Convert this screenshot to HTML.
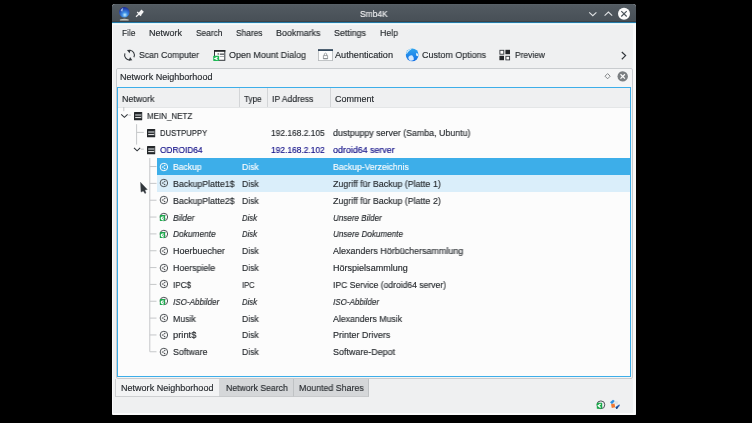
<!DOCTYPE html>
<html><head><meta charset="utf-8">
<style>
*{margin:0;padding:0;box-sizing:border-box}
html,body{width:752px;height:423px;overflow:hidden;background:#000}
body{position:relative;font-family:"Liberation Sans",sans-serif;font-size:9px;color:#262a2e}
.a{position:absolute;white-space:nowrap;line-height:12px;transform-origin:0 0;will-change:transform;-webkit-text-stroke:0.15px currentColor}
svg{position:absolute;overflow:visible}
</style></head><body>

<div style="position:absolute;left:112px;top:4px;width:524px;height:411px;background:#eff0f1;border-radius:3px 3px 1px 1px;border-left:1px solid #f9f9fa;border-right:3px solid #f8f9f9;border-bottom:2px solid #fbfbfb;"></div>
<div style="position:absolute;left:112px;top:4px;width:524px;height:18px;background:linear-gradient(#5a636a,#525a61 8%,#474f56);border-radius:3px 3px 0 0;"></div>
<div style="position:absolute;left:112px;top:21px;width:524px;height:1px;background:#3c4146;"></div>
<div style="position:absolute;left:112px;top:22px;width:524px;height:1px;background:#2479a6;"></div>
<div style="position:absolute;left:112px;top:23px;width:524px;height:1px;background:#dff6fd;"></div>
<div style="position:absolute;left:112px;top:24px;width:524px;height:1px;background:#faf9f7;"></div>
<div class="a" style="left:360.20px;top:7.85px;color:#eff0f1;transform:scaleX(0.9390);">Smb4K</div>
<svg style="left:112px;top:4px" width="40" height="18">
<defs><radialGradient id="g1" cx="0.55" cy="0.75" r="0.7"><stop offset="0" stop-color="#c9f3ff"/><stop offset="0.35" stop-color="#3f8fe6"/><stop offset="1" stop-color="#1a2fa0"/></radialGradient></defs>
<circle cx="12.3" cy="8.3" r="5.2" fill="url(#g1)"/>
<path d="M8.6 6.2 Q9.6 4.2 11.2 3.9 Q10.8 5.4 10.4 7.6 Q9.4 7.4 8.6 6.2 Z" fill="#c4daf6" opacity="0.75"/>
<path d="M8.2 15.8 Q12.3 13.6 16.6 15.8 Z" fill="#d8d4c8"/>
<rect x="7.8" y="15.4" width="9" height="1" fill="#cfcbc0" rx="0.4"/>
<path d="M24 12.8 L27 10" stroke="#f4f4f4" stroke-width="1.2"/>
<path d="M29.4 5.6 L31.8 7.8 L28.9 11.5 L26.2 9.2 Z" fill="#f4f4f4"/>
<path d="M25.2 8 L29 11.8" stroke="#f4f4f4" stroke-width="1.3"/>
</svg>
<svg style="left:580px;top:4px" width="56" height="18">
<path d="M9.2 8.3 L12.8 11.7 L16.4 8.3" fill="none" stroke="#dfe1e3" stroke-width="1.1"/>
<path d="M24.6 11.7 L28.4 8.1 L32.2 11.7" fill="none" stroke="#dfe1e3" stroke-width="1.1"/>
<circle cx="44" cy="9.8" r="6" fill="#fcfcfc"/>
<path d="M41.3 7.1 L46.7 12.5 M46.7 7.1 L41.3 12.5" stroke="#475057" stroke-width="1.1"/>
</svg>
<div class="a" style="left:121.60px;top:27.35px;transform:scaleX(0.9241);">File</div>
<div class="a" style="left:148.80px;top:27.35px;transform:scaleX(0.9970);">Network</div>
<div class="a" style="left:195.80px;top:27.35px;transform:scaleX(0.9263);">Search</div>
<div class="a" style="left:235.80px;top:27.35px;transform:scaleX(0.9298);">Shares</div>
<div class="a" style="left:276.00px;top:27.35px;transform:scaleX(0.9867);">Bookmarks</div>
<div class="a" style="left:334.00px;top:27.35px;transform:scaleX(0.9815);">Settings</div>
<div class="a" style="left:379.50px;top:27.35px;transform:scaleX(0.9730);">Help</div>
<div class="a" style="left:139.00px;top:49.35px;transform:scaleX(0.9600);">Scan Computer</div>
<div class="a" style="left:229.00px;top:49.35px;transform:scaleX(0.9935);">Open Mount Dialog</div>
<div class="a" style="left:335.00px;top:49.35px;transform:scaleX(1.0175);">Authentication</div>
<div class="a" style="left:422.00px;top:49.35px;transform:scaleX(0.9922);">Custom Options</div>
<div class="a" style="left:515.00px;top:49.35px;transform:scaleX(0.9346);">Preview</div>
<svg style="left:112px;top:42px" width="524" height="24">
<g fill="none" stroke="#31363b" stroke-width="1.1">
<path d="M17.6 8.2 A4.9 4.9 0 0 1 21.9 15.2"/>
<path d="M12.9 11.4 A4.9 4.9 0 0 0 18.2 17.9"/>
</g>
<path d="M14.9 8.1 L18.6 7.7 L17.6 11.3 Z" fill="#31363b"/>
<path d="M20.3 18.3 L16.6 18.4 L18.1 14.9 Z" fill="#31363b"/>
</svg>
<svg style="left:212px;top:48px" width="16" height="16">
<rect x="2.5" y="2.5" width="10.3" height="9.8" fill="#fcfcfc" stroke="#31363b" stroke-width="1"/>
<rect x="2" y="2" width="11.3" height="1.8" fill="#232629"/>
<rect x="5.5" y="5.3" width="1.5" height="1.3" fill="#5a5f63"/>
<rect x="7.8" y="5.6" width="4.2" height="1.1" fill="#31363b"/>
<rect x="7.8" y="8" width="4.2" height="0.9" fill="#9aa0a4"/>
<rect x="1.2" y="7.8" width="5.9" height="5.1" fill="#1db954" rx="0.6"/>
<path d="M5.5 9.2 L3 10.4 L5.5 11.6" fill="none" stroke="#fff" stroke-width="1.2"/>
</svg>
<svg style="left:316px;top:48px" width="18" height="16">
<rect x="2.4" y="1.6" width="14.2" height="11" fill="#fcfcfc" stroke="#b4b8bb" stroke-width="0.8"/>
<rect x="2" y="1.2" width="15" height="1.8" fill="#34495e"/>
<path d="M7.4 10.8 L7.4 7.6 L11.6 7.6 L11.6 10.8 Z M8.3 7.6 L8.3 5.8 Q9.5 4.4 10.7 5.8 L10.7 7.6" fill="none" stroke="#8d9194" stroke-width="0.8"/>
<rect x="7.2" y="10" width="4.6" height="1" fill="#8d9194"/>
</svg>
<svg style="left:402px;top:46px" width="20" height="18">
<defs><linearGradient id="g2" x1="0" y1="0" x2="0" y2="1"><stop offset="0" stop-color="#2fa4ee"/><stop offset="1" stop-color="#1470e6"/></linearGradient></defs>
<circle cx="10.2" cy="8.9" r="6.4" fill="url(#g2)"/>
<path d="M4.2 7.6 Q4.8 3.8 9.8 2.6 Q9.6 3.8 7.6 4.6 Q6 6 4.8 8 Z" fill="#d2ecfb"/>
<path d="M6.4 11 Q7.8 8.8 10.4 9.4 Q12.2 11 11.8 13.8 Q9.4 15.4 7.6 14.4 Q6 13 6.4 11 Z" fill="#d4e8fc"/>
<path d="M14.2 6.8 Q16.4 7.2 16.6 10.2 Q15 10.4 14 9.2 Z" fill="#dcf0fc"/>
</svg>
<svg style="left:496px;top:46px" width="18" height="18">
<rect x="3.9" y="4.3" width="3.9" height="3.9" fill="#fff" stroke="#31363b" stroke-width="0.9"/>
<rect x="9.4" y="3.8" width="4.6" height="4.4" fill="#232629"/>
<rect x="3.4" y="9.8" width="4.6" height="4.4" fill="#232629"/>
<rect x="9.9" y="10.3" width="3.7" height="3.6" fill="#fff" stroke="#31363b" stroke-width="0.9"/>
</svg>
<svg style="left:616px;top:46px" width="16" height="16">
<path d="M5.8 6 L9.6 9.6 L5.8 13.2" fill="none" stroke="#31363b" stroke-width="1.2"/>
</svg>
<div style="position:absolute;left:116px;top:68px;width:517px;height:311px;background:#f4f5f6;border:1px solid #c9cccf;border-radius:2px;"></div>
<div class="a" style="left:119.60px;top:71.35px;transform:scaleX(1.0043);">Network Neighborhood</div>
<svg style="left:598px;top:66px" width="36" height="22">
<path d="M9.6 7.6 L12.2 10.2 L9.6 12.8 L7 10.2 Z" fill="none" stroke="#76797c" stroke-width="0.9"/>
<circle cx="24.7" cy="10.4" r="5.2" fill="#7b7f82"/>
<path d="M22.5 8.2 L26.9 12.6 M26.9 8.2 L22.5 12.6" stroke="#fcfcfc" stroke-width="1.25"/>
</svg>
<div style="position:absolute;left:117px;top:87px;width:514px;height:290px;background:#fcfcfc;border:1px solid #3daee9;"></div>
<div style="position:absolute;left:118px;top:88px;width:512px;height:20px;background:#eff0f1;border-bottom:1px solid #e4e6e7;"></div>
<div style="position:absolute;left:239px;top:88px;width:1px;height:19px;background:#d3d5d7;"></div>
<div style="position:absolute;left:267px;top:88px;width:1px;height:19px;background:#d3d5d7;"></div>
<div style="position:absolute;left:330px;top:88px;width:1px;height:19px;background:#d3d5d7;"></div>
<div class="a" style="left:122.00px;top:92.75px;transform:scaleX(0.9819);">Network</div>
<div class="a" style="left:244.40px;top:92.75px;transform:scaleX(0.9026);">Type</div>
<div class="a" style="left:271.80px;top:92.75px;transform:scaleX(0.9562);">IP Address</div>
<div class="a" style="left:334.50px;top:92.75px;">Comment</div>
<div style="position:absolute;left:156.6px;top:158.12px;width:473.4px;height:16.4px;background:#3daee9;"></div>
<div style="position:absolute;left:156.6px;top:174.76px;width:473.4px;height:17.1px;background:#daeefa;"></div>
<svg style="left:118px;top:107px" width="60" height="260">
<path d="M5.8 0 V4.2 M18.6 17.2 V37.6 M18.6 25.4 H25.8 M31.8 51 V244.7" fill="none" stroke="#c5c7c9" stroke-width="1"/>
<path d="M31.8 59.54 H38.5" stroke="#c5c7c9" stroke-width="1"/>
<path d="M31.8 76.38 H38.5" stroke="#c5c7c9" stroke-width="1"/>
<path d="M31.8 93.22 H38.5" stroke="#c5c7c9" stroke-width="1"/>
<path d="M31.8 110.06 H38.5" stroke="#c5c7c9" stroke-width="1"/>
<path d="M31.8 126.90 H38.5" stroke="#c5c7c9" stroke-width="1"/>
<path d="M31.8 143.74 H38.5" stroke="#c5c7c9" stroke-width="1"/>
<path d="M31.8 160.58 H38.5" stroke="#c5c7c9" stroke-width="1"/>
<path d="M31.8 177.42 H38.5" stroke="#c5c7c9" stroke-width="1"/>
<path d="M31.8 194.26 H38.5" stroke="#c5c7c9" stroke-width="1"/>
<path d="M31.8 211.10 H38.5" stroke="#c5c7c9" stroke-width="1"/>
<path d="M31.8 227.94 H38.5" stroke="#c5c7c9" stroke-width="1"/>
<path d="M31.8 244.78 H38.5" stroke="#c5c7c9" stroke-width="1"/>
<path d="M3.2 7.3 L6.4 10.3 L9.6 7.3" fill="none" stroke="#31363b" stroke-width="1.1"/>
<path d="M10.3 8.1 H13" stroke="#c5c7c9" stroke-width="1"/>
<path d="M16 40.8 L19.1 43.8 L22.2 40.8" fill="none" stroke="#31363b" stroke-width="1.1"/>
<path d="M22.9 42.2 H25.8" stroke="#c5c7c9" stroke-width="1"/>
</svg>
<svg style="left:134px;top:112px" width="9" height="9"><rect x="0" y="0" width="8.2" height="8.2" fill="#232629" rx="0.5"/><rect x="1.2" y="2" width="6" height="2.1" fill="#85898c"/><rect x="1.2" y="5.1" width="6" height="1" fill="#f4f4f4"/><rect x="6.9" y="1.6" width="0.6" height="4.8" fill="#7d8184"/></svg>
<svg style="left:147px;top:129px" width="9" height="9"><rect x="0" y="0" width="8.2" height="8.2" fill="#232629" rx="0.5"/><rect x="1.2" y="2" width="6" height="2.1" fill="#85898c"/><rect x="1.2" y="5.1" width="6" height="1" fill="#f4f4f4"/><rect x="6.9" y="1.6" width="0.6" height="4.8" fill="#7d8184"/></svg>
<svg style="left:147px;top:146px" width="9" height="9"><rect x="0" y="0" width="8.2" height="8.2" fill="#232629" rx="0.5"/><rect x="1.2" y="2" width="6" height="2.1" fill="#85898c"/><rect x="1.2" y="5.1" width="6" height="1" fill="#f4f4f4"/><rect x="6.9" y="1.6" width="0.6" height="4.8" fill="#7d8184"/></svg>
<div class="a" style="left:147.00px;top:110.05px;transform:scaleX(0.8882);">MEIN_NETZ</div>
<div class="a" style="left:160.00px;top:127.39px;transform:scaleX(0.8582);">DUSTPUPPY</div>
<div class="a" style="left:270.50px;top:127.39px;transform:scaleX(0.9339);">192.168.2.105</div>
<div class="a" style="left:332.80px;top:127.39px;transform:scaleX(0.9814);">dustpuppy server (Samba, Ubuntu)</div>
<div class="a" style="left:160.00px;top:144.23px;color:#0e0c86;transform:scaleX(0.9239);">ODROID64</div>
<div class="a" style="left:270.50px;top:144.23px;color:#0e0c86;transform:scaleX(0.9339);">192.168.2.102</div>
<div class="a" style="left:332.80px;top:144.23px;color:#0e0c86;transform:scaleX(0.9872);">odroid64 server</div>
<div class="a" style="left:172.80px;top:161.07px;color:#fcfcfc;transform:scaleX(0.9500);">Backup</div>
<div class="a" style="left:242.20px;top:161.07px;color:#fcfcfc;transform:scaleX(0.9545);">Disk</div>
<div class="a" style="left:332.90px;top:161.07px;color:#fcfcfc;transform:scaleX(0.9582);">Backup-Verzeichnis</div>
<svg style="left:158px;top:160.54px" width="12" height="12"><circle cx="5.9" cy="6" r="3.75" fill="none" stroke="#fcfcfc" stroke-width="1"/><path d="M6.8 4.5 L4.3 6 L6.6 7.5" fill="none" stroke="#fcfcfc" stroke-width="0.55"/><circle cx="6.8" cy="4.5" r="0.65" fill="#fcfcfc"/><circle cx="4.3" cy="6" r="0.55" fill="#fcfcfc"/><circle cx="6.6" cy="7.5" r="0.75" fill="#fcfcfc"/></svg>
<div class="a" style="left:172.80px;top:177.91px;color:#262a2e;transform:scaleX(0.9762);">BackupPlatte1$</div>
<div class="a" style="left:242.20px;top:177.91px;color:#262a2e;transform:scaleX(0.9545);">Disk</div>
<div class="a" style="left:332.90px;top:177.91px;color:#262a2e;transform:scaleX(0.9800);">Zugriff für Backup (Platte 1)</div>
<svg style="left:158px;top:177.38px" width="12" height="12"><circle cx="5.9" cy="6" r="3.75" fill="none" stroke="#505458" stroke-width="1"/><path d="M6.8 4.5 L4.3 6 L6.6 7.5" fill="none" stroke="#505458" stroke-width="0.55"/><circle cx="6.8" cy="4.5" r="0.65" fill="#505458"/><circle cx="4.3" cy="6" r="0.55" fill="#505458"/><circle cx="6.6" cy="7.5" r="0.75" fill="#505458"/></svg>
<div class="a" style="left:172.80px;top:194.75px;color:#262a2e;transform:scaleX(0.9762);">BackupPlatte2$</div>
<div class="a" style="left:242.20px;top:194.75px;color:#262a2e;transform:scaleX(0.9545);">Disk</div>
<div class="a" style="left:332.90px;top:194.75px;color:#262a2e;transform:scaleX(0.9800);">Zugriff für Backup (Platte 2)</div>
<svg style="left:158px;top:194.22px" width="12" height="12"><circle cx="5.9" cy="6" r="3.75" fill="none" stroke="#505458" stroke-width="1"/><path d="M6.8 4.5 L4.3 6 L6.6 7.5" fill="none" stroke="#505458" stroke-width="0.55"/><circle cx="6.8" cy="4.5" r="0.65" fill="#505458"/><circle cx="4.3" cy="6" r="0.55" fill="#505458"/><circle cx="6.6" cy="7.5" r="0.75" fill="#505458"/></svg>
<div class="a" style="left:172.80px;top:211.59px;color:#262a2e;font-style:italic;transform:scaleX(0.9313);">Bilder</div>
<div class="a" style="left:242.20px;top:211.59px;color:#262a2e;font-style:italic;transform:scaleX(0.8603);">Disk</div>
<div class="a" style="left:332.90px;top:211.59px;color:#262a2e;font-style:italic;transform:scaleX(0.8942);">Unsere Bilder</div>
<svg style="left:158px;top:211.06px" width="12" height="12"><circle cx="5.9" cy="6" r="3.75" fill="none" stroke="#505458" stroke-width="1"/><path d="M6.8 4.5 L4.3 6 L6.6 7.5" fill="none" stroke="#505458" stroke-width="0.55"/><circle cx="6.8" cy="4.5" r="0.65" fill="#505458"/><circle cx="4.3" cy="6" r="0.55" fill="#505458"/><circle cx="6.6" cy="7.5" r="0.75" fill="#505458"/><rect x="1.8" y="4.0" width="5.3" height="6.1" fill="#1fa64e" rx="0.5"/><path d="M5.6 5.8 Q3.2 5.9 3.3 7.4 Q3.4 8.9 5.6 9" fill="none" stroke="#fff" stroke-width="1.3"/><circle cx="5.2" cy="7.4" r="0.6" fill="#fff"/></svg>
<div class="a" style="left:172.80px;top:228.43px;color:#262a2e;font-style:italic;transform:scaleX(0.9283);">Dokumente</div>
<div class="a" style="left:242.20px;top:228.43px;color:#262a2e;font-style:italic;transform:scaleX(0.8603);">Disk</div>
<div class="a" style="left:332.90px;top:228.43px;color:#262a2e;font-style:italic;transform:scaleX(0.9032);">Unsere Dokumente</div>
<svg style="left:158px;top:227.90px" width="12" height="12"><circle cx="5.9" cy="6" r="3.75" fill="none" stroke="#505458" stroke-width="1"/><path d="M6.8 4.5 L4.3 6 L6.6 7.5" fill="none" stroke="#505458" stroke-width="0.55"/><circle cx="6.8" cy="4.5" r="0.65" fill="#505458"/><circle cx="4.3" cy="6" r="0.55" fill="#505458"/><circle cx="6.6" cy="7.5" r="0.75" fill="#505458"/><rect x="1.8" y="4.0" width="5.3" height="6.1" fill="#1fa64e" rx="0.5"/><path d="M5.6 5.8 Q3.2 5.9 3.3 7.4 Q3.4 8.9 5.6 9" fill="none" stroke="#fff" stroke-width="1.3"/><circle cx="5.2" cy="7.4" r="0.6" fill="#fff"/></svg>
<div class="a" style="left:172.80px;top:245.27px;color:#262a2e;transform:scaleX(0.9962);">Hoerbuecher</div>
<div class="a" style="left:242.20px;top:245.27px;color:#262a2e;transform:scaleX(0.9545);">Disk</div>
<div class="a" style="left:332.90px;top:245.27px;color:#262a2e;transform:scaleX(0.9947);">Alexanders Hörbüchersammlung</div>
<svg style="left:158px;top:244.74px" width="12" height="12"><circle cx="5.9" cy="6" r="3.75" fill="none" stroke="#505458" stroke-width="1"/><path d="M6.8 4.5 L4.3 6 L6.6 7.5" fill="none" stroke="#505458" stroke-width="0.55"/><circle cx="6.8" cy="4.5" r="0.65" fill="#505458"/><circle cx="4.3" cy="6" r="0.55" fill="#505458"/><circle cx="6.6" cy="7.5" r="0.75" fill="#505458"/></svg>
<div class="a" style="left:172.80px;top:262.11px;color:#262a2e;transform:scaleX(0.9814);">Hoerspiele</div>
<div class="a" style="left:242.20px;top:262.11px;color:#262a2e;transform:scaleX(0.9545);">Disk</div>
<div class="a" style="left:332.90px;top:262.11px;color:#262a2e;transform:scaleX(1.0034);">Hörspielsammlung</div>
<svg style="left:158px;top:261.58px" width="12" height="12"><circle cx="5.9" cy="6" r="3.75" fill="none" stroke="#505458" stroke-width="1"/><path d="M6.8 4.5 L4.3 6 L6.6 7.5" fill="none" stroke="#505458" stroke-width="0.55"/><circle cx="6.8" cy="4.5" r="0.65" fill="#505458"/><circle cx="4.3" cy="6" r="0.55" fill="#505458"/><circle cx="6.6" cy="7.5" r="0.75" fill="#505458"/></svg>
<div class="a" style="left:172.80px;top:278.95px;color:#262a2e;transform:scaleX(0.9050);">IPC$</div>
<div class="a" style="left:242.20px;top:278.95px;color:#262a2e;transform:scaleX(0.8333);">IPC</div>
<div class="a" style="left:332.90px;top:278.95px;color:#262a2e;transform:scaleX(0.9536);">IPC Service (odroid64 server)</div>
<svg style="left:158px;top:278.42px" width="12" height="12"><circle cx="5.9" cy="6" r="3.75" fill="none" stroke="#505458" stroke-width="1"/><path d="M6.8 4.5 L4.3 6 L6.6 7.5" fill="none" stroke="#505458" stroke-width="0.55"/><circle cx="6.8" cy="4.5" r="0.65" fill="#505458"/><circle cx="4.3" cy="6" r="0.55" fill="#505458"/><circle cx="6.6" cy="7.5" r="0.75" fill="#505458"/></svg>
<div class="a" style="left:172.80px;top:295.79px;color:#262a2e;font-style:italic;transform:scaleX(0.8977);">ISO-Abbilder</div>
<div class="a" style="left:242.20px;top:295.79px;color:#262a2e;font-style:italic;transform:scaleX(0.8603);">Disk</div>
<div class="a" style="left:332.90px;top:295.79px;color:#262a2e;font-style:italic;transform:scaleX(0.8938);">ISO-Abbilder</div>
<svg style="left:158px;top:295.26px" width="12" height="12"><circle cx="5.9" cy="6" r="3.75" fill="none" stroke="#505458" stroke-width="1"/><path d="M6.8 4.5 L4.3 6 L6.6 7.5" fill="none" stroke="#505458" stroke-width="0.55"/><circle cx="6.8" cy="4.5" r="0.65" fill="#505458"/><circle cx="4.3" cy="6" r="0.55" fill="#505458"/><circle cx="6.6" cy="7.5" r="0.75" fill="#505458"/><rect x="1.8" y="4.0" width="5.3" height="6.1" fill="#1fa64e" rx="0.5"/><path d="M5.6 5.8 Q3.2 5.9 3.3 7.4 Q3.4 8.9 5.6 9" fill="none" stroke="#fff" stroke-width="1.3"/><circle cx="5.2" cy="7.4" r="0.6" fill="#fff"/></svg>
<div class="a" style="left:172.80px;top:312.63px;color:#262a2e;transform:scaleX(0.9703);">Musik</div>
<div class="a" style="left:242.20px;top:312.63px;color:#262a2e;transform:scaleX(0.9545);">Disk</div>
<div class="a" style="left:332.90px;top:312.63px;color:#262a2e;transform:scaleX(0.9733);">Alexanders Musik</div>
<svg style="left:158px;top:312.10px" width="12" height="12"><circle cx="5.9" cy="6" r="3.75" fill="none" stroke="#505458" stroke-width="1"/><path d="M6.8 4.5 L4.3 6 L6.6 7.5" fill="none" stroke="#505458" stroke-width="0.55"/><circle cx="6.8" cy="4.5" r="0.65" fill="#505458"/><circle cx="4.3" cy="6" r="0.55" fill="#505458"/><circle cx="6.6" cy="7.5" r="0.75" fill="#505458"/></svg>
<div class="a" style="left:172.80px;top:329.47px;color:#262a2e;transform:scaleX(1.0400);">print$</div>
<div class="a" style="left:242.20px;top:329.47px;color:#262a2e;transform:scaleX(0.9545);">Disk</div>
<div class="a" style="left:332.90px;top:329.47px;color:#262a2e;transform:scaleX(0.9948);">Printer Drivers</div>
<svg style="left:158px;top:328.94px" width="12" height="12"><circle cx="5.9" cy="6" r="3.75" fill="none" stroke="#505458" stroke-width="1"/><path d="M6.8 4.5 L4.3 6 L6.6 7.5" fill="none" stroke="#505458" stroke-width="0.55"/><circle cx="6.8" cy="4.5" r="0.65" fill="#505458"/><circle cx="4.3" cy="6" r="0.55" fill="#505458"/><circle cx="6.6" cy="7.5" r="0.75" fill="#505458"/></svg>
<div class="a" style="left:172.80px;top:346.31px;color:#262a2e;transform:scaleX(0.9718);">Software</div>
<div class="a" style="left:242.20px;top:346.31px;color:#262a2e;transform:scaleX(0.9545);">Disk</div>
<div class="a" style="left:332.90px;top:346.31px;color:#262a2e;transform:scaleX(0.9920);">Software-Depot</div>
<svg style="left:158px;top:345.78px" width="12" height="12"><circle cx="5.9" cy="6" r="3.75" fill="none" stroke="#505458" stroke-width="1"/><path d="M6.8 4.5 L4.3 6 L6.6 7.5" fill="none" stroke="#505458" stroke-width="0.55"/><circle cx="6.8" cy="4.5" r="0.65" fill="#505458"/><circle cx="4.3" cy="6" r="0.55" fill="#505458"/><circle cx="6.6" cy="7.5" r="0.75" fill="#505458"/></svg>
<svg style="left:138px;top:180px" width="14" height="16"><path d="M2.5 2.3 L9.3 9.5 L6.9 9.9 L8 13 L6.9 13.4 L5.3 10.9 L3 12.1 Z" fill="#31363b" stroke="#4a4f53" stroke-width="0.4"/></svg>
<div style="position:absolute;left:115px;top:378.6px;width:104.5px;height:18px;background:#f2f3f4;border:1px solid #cdcfd1;border-top:none;"></div>
<div style="position:absolute;left:219px;top:378.6px;width:75px;height:18px;background:#d5d7d9;border-right:1px solid #bfc2c4;border-bottom:1px solid #c8cacc;"></div>
<div style="position:absolute;left:294px;top:378.6px;width:75px;height:18px;background:#d5d7d9;border-right:1px solid #bfc2c4;border-bottom:1px solid #c8cacc;"></div>
<div class="a" style="left:121.00px;top:382.05px;transform:scaleX(1.0043);">Network Neighborhood</div>
<div class="a" style="left:225.80px;top:382.05px;transform:scaleX(0.9656);">Network Search</div>
<div class="a" style="left:298.70px;top:382.05px;transform:scaleX(0.9803);">Mounted Shares</div>
<svg style="left:594px;top:396px" width="30" height="16">
<circle cx="6.9" cy="8.8" r="3.9" fill="none" stroke="#4d5257" stroke-width="1"/>
<rect x="2.8" y="6.8" width="5.4" height="6" fill="#1aa84a" rx="0.6"/>
<path d="M6.6 8 L4.3 9.8 L6.6 11.6" fill="none" stroke="#fff" stroke-width="1.3"/>
<path d="M16 6.2 L19 3.8 L20.8 5 L18 8.2 Z" fill="#2f8fe0"/>
<path d="M17 8.2 L20.6 7.6 L21.2 11.2 L17.8 12 Z" fill="#f07a35"/>
<path d="M20.8 5 L24.4 5.6 L23.6 8.8 L20.6 7.6 Z" fill="#dfe3e6"/>
<path d="M21.2 11.2 L25.4 8.2 L25.8 9.8 L22.8 13 Z" fill="#2a63b8"/>
<path d="M21.8 12.2 L23.6 10.6 L23.2 13 Z" fill="#0d2a5a"/>
</svg>
</body></html>
